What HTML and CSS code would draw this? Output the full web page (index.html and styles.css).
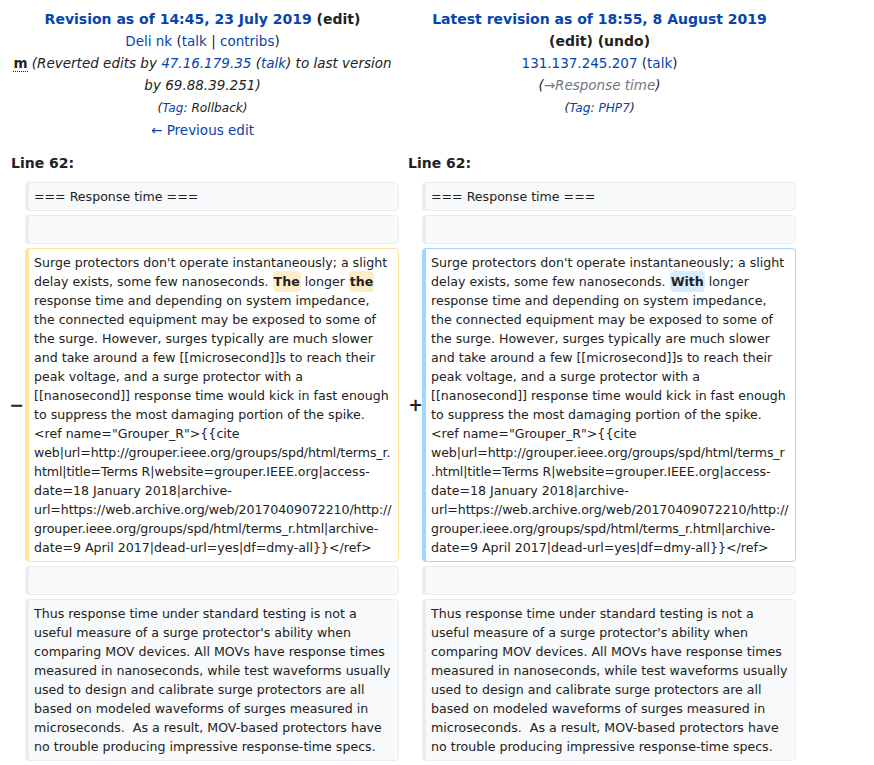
FILE: index.html
```html
<!DOCTYPE html>
<html>
<head>
<meta charset="utf-8">
<link rel="stylesheet" href="styles.css">
</head>
<body>
<div class="page">
<table class="diff">
<colgroup><col class="c-marker"><col class="c-content"><col class="c-marker"><col class="c-content"></colgroup>
<tr class="titles">
<td colspan="2" class="title">
<div class="t-head"><a class="link" href="#">Revision as of 14:45, 23 July 2019</a> <span class="dark">(<span>edit</span>)</span></div>
<div><a class="link" href="#">Deli nk</a> (<a class="link" href="#">talk</a> | <a class="link" href="#">contribs</a>)</div>
<div><abbr class="minor" title="This is a minor edit">m</abbr> <span class="comment">(Reverted edits by <a class="link" href="#">47.16.179.35</a> (<a class="link" href="#">talk</a>) to last version by 69.88.39.251)</span></div>
<div><span class="tags">(<a class="link" href="#">Tag</a>: Rollback)</span></div>
<div><a class="link" href="#">← Previous edit</a></div>
</td>
<td colspan="2" class="title">
<div class="t-head"><a class="link" href="#">Latest revision as of 18:55, 8 August 2019</a> <span class="dark nowrap">(edit) (undo)</span></div>
<div><a class="link" href="#">131.137.245.207</a> (<a class="link" href="#">talk</a>)</div>
<div><span class="comment">(<span class="auto">→Response time</span>)</span></div>
<div><span class="tags">(<a class="link" href="#">Tag</a>: <a class="link" href="#">PHP7</a>)</span></div>
</td>
</tr>
<tr>
<td colspan="2" class="lineno">Line 62:</td>
<td colspan="2" class="lineno">Line 62:</td>
</tr>
<tr>
<td class="marker"></td>
<td class="line context"><div>=== Response time ===</div></td>
<td class="marker"></td>
<td class="line context"><div>=== Response time ===</div></td>
</tr>
<tr>
<td class="marker"></td>
<td class="line context"><br></td>
<td class="marker"></td>
<td class="line context"><br></td>
</tr>
<tr>
<td class="marker"><span class="sign minus">−</span></td>
<td class="line deleted"><div>Surge protectors don't operate instantaneously; a slight delay exists, some few nanoseconds. <del class="change">The</del> longer <del class="change">the</del> response time and depending on system impedance, the connected equipment may be exposed to some of the surge. However, surges typically are much slower and take around a few [[microsecond]]s to reach their peak voltage, and a surge protector with a [[nanosecond]] response time would kick in fast enough to suppress the most damaging portion of the spike. &lt;ref name="Grouper_R"&gt;{{cite <span class="nw">web|url=http://grouper.ieee.org/groups/spd/html/terms_r.</span><wbr><span class="nw">html|title=Terms</span> R|website=grouper.IEEE.org|access-date=18 January 2018|archive-<span class="nw">url=https://web.archive.org/web/20170409072210/http://</span><wbr><span class="nw">grouper.ieee.org/groups/spd/html/terms_r.html|archive-</span>date=9 April 2017|dead-url=yes|df=dmy-all}}&lt;/ref&gt;</div></td>
<td class="marker"><span class="sign plus">+</span></td>
<td class="line added"><div>Surge protectors don't operate instantaneously; a slight delay exists, some few nanoseconds. <ins class="change">With</ins> longer response time and depending on system impedance, the connected equipment may be exposed to some of the surge. However, surges typically are much slower and take around a few [[microsecond]]s to reach their peak voltage, and a surge protector with a [[nanosecond]] response time would kick in fast enough to suppress the most damaging portion of the spike. &lt;ref name="Grouper_R"&gt;{{cite <span class="nw">web|url=http://grouper.ieee.org/groups/spd/html/terms_r</span><wbr><span class="nw">.html|title=Terms</span> R|website=grouper.IEEE.org|access-date=18 January 2018|archive-<span class="nw">url=https://web.archive.org/web/20170409072210/http://</span><wbr><span class="nw">grouper.ieee.org/groups/spd/html/terms_r.html|archive-</span>date=9 April 2017|dead-url=yes|df=dmy-all}}&lt;/ref&gt;</div></td>
</tr>
<tr>
<td class="marker"></td>
<td class="line context"><br></td>
<td class="marker"></td>
<td class="line context"><br></td>
</tr>
<tr>
<td class="marker"></td>
<td class="line context"><div>Thus response time under standard testing is not a useful measure of a surge protector's ability when comparing MOV devices. All MOVs have response times measured in nanoseconds, while test waveforms usually used to design and calibrate surge protectors are all based on modeled waveforms of surges measured in microseconds.  As a result, MOV-based protectors have no trouble producing impressive response-time specs.</div></td>
<td class="marker"></td>
<td class="line context"><div>Thus response time under standard testing is not a useful measure of a surge protector's ability when comparing MOV devices. All MOVs have response times measured in nanoseconds, while test waveforms usually used to design and calibrate surge protectors are all based on modeled waveforms of surges measured in microseconds.  As a result, MOV-based protectors have no trouble producing impressive response-time specs.</div></td>
</tr>
</table>
</div>
</body>
</html>
```

FILE: styles.css
```css
html, body {
  margin: 0;
  padding: 0;
  background: #ffffff;
}
body {
  font-family: "DejaVu Sans", sans-serif;
  font-size: 14px;
  color: #222222;
}
.page {
  padding: 0 0 0 2px;
}
.diff {
  border-spacing: 4px;
  table-layout: fixed;
  width: 798px;
  margin: 0;
}
.c-marker { width: 15px; }
.c-content { width: 374px; }
.diff td {
  padding: 0.33em 0.5em;
}
.diff td.title {
  text-align: center;
  vertical-align: top;
  font-size: 13.5px;
  line-height: 22px;
  padding: 4px 2px 5px 2px;
}
.t-head {
  font-weight: bold;
  font-size: 14px;
}
.nowrap { white-space: nowrap; }
.link {
  color: #0645ad;
  text-decoration: none;
}
.dark { color: #222222; }
.minor {
  font-weight: bold;
  text-decoration: none;
  border-bottom: 1px dotted #222222;
  cursor: help;
}
.comment {
  font-style: italic;
}
.auto {
  color: #72777d;
}
.tags {
  font-style: italic;
  font-size: 90%;
}
.diff td.lineno {
  font-weight: bold;
  padding: 2px 4px 4px 5px;
  line-height: 22px;
}
.diff td.marker {
  padding: 0;
  text-align: right;
  font-weight: bold;
  font-size: 1.25em;
  line-height: 1.2;
  vertical-align: middle;
}
.sign { display: inline-block; }
.minus { margin-right: -3px; }
.plus { margin-right: -5px; }
.diff td.line {
  font-size: 12.6px;
  line-height: 19px;
  vertical-align: top;
  white-space: pre-wrap;
  overflow-wrap: break-word;
  word-wrap: break-word;
  border-style: solid;
  border-width: 1px 1px 1px 4px;
  border-radius: 0.33em;
  padding: 4px 6px 4px 5px;
}
.line div {
  overflow-wrap: break-word;
}
.nw {
  white-space: nowrap;
  letter-spacing: -0.1px;
}
.context {
  background: #f8f9fa;
  border-color: #eaecf0;
  color: #222222;
}
.deleted {
  border-color: #ffe49c;
}
.added {
  border-color: #a3d3ff;
}
.change {
  font-weight: bold;
  text-decoration: none;
  border-radius: 0.33em;
  padding: 0.25em 1px;
}
.deleted .change { background: #feeec8; }
.added .change { background: #d8ecff; }
```
